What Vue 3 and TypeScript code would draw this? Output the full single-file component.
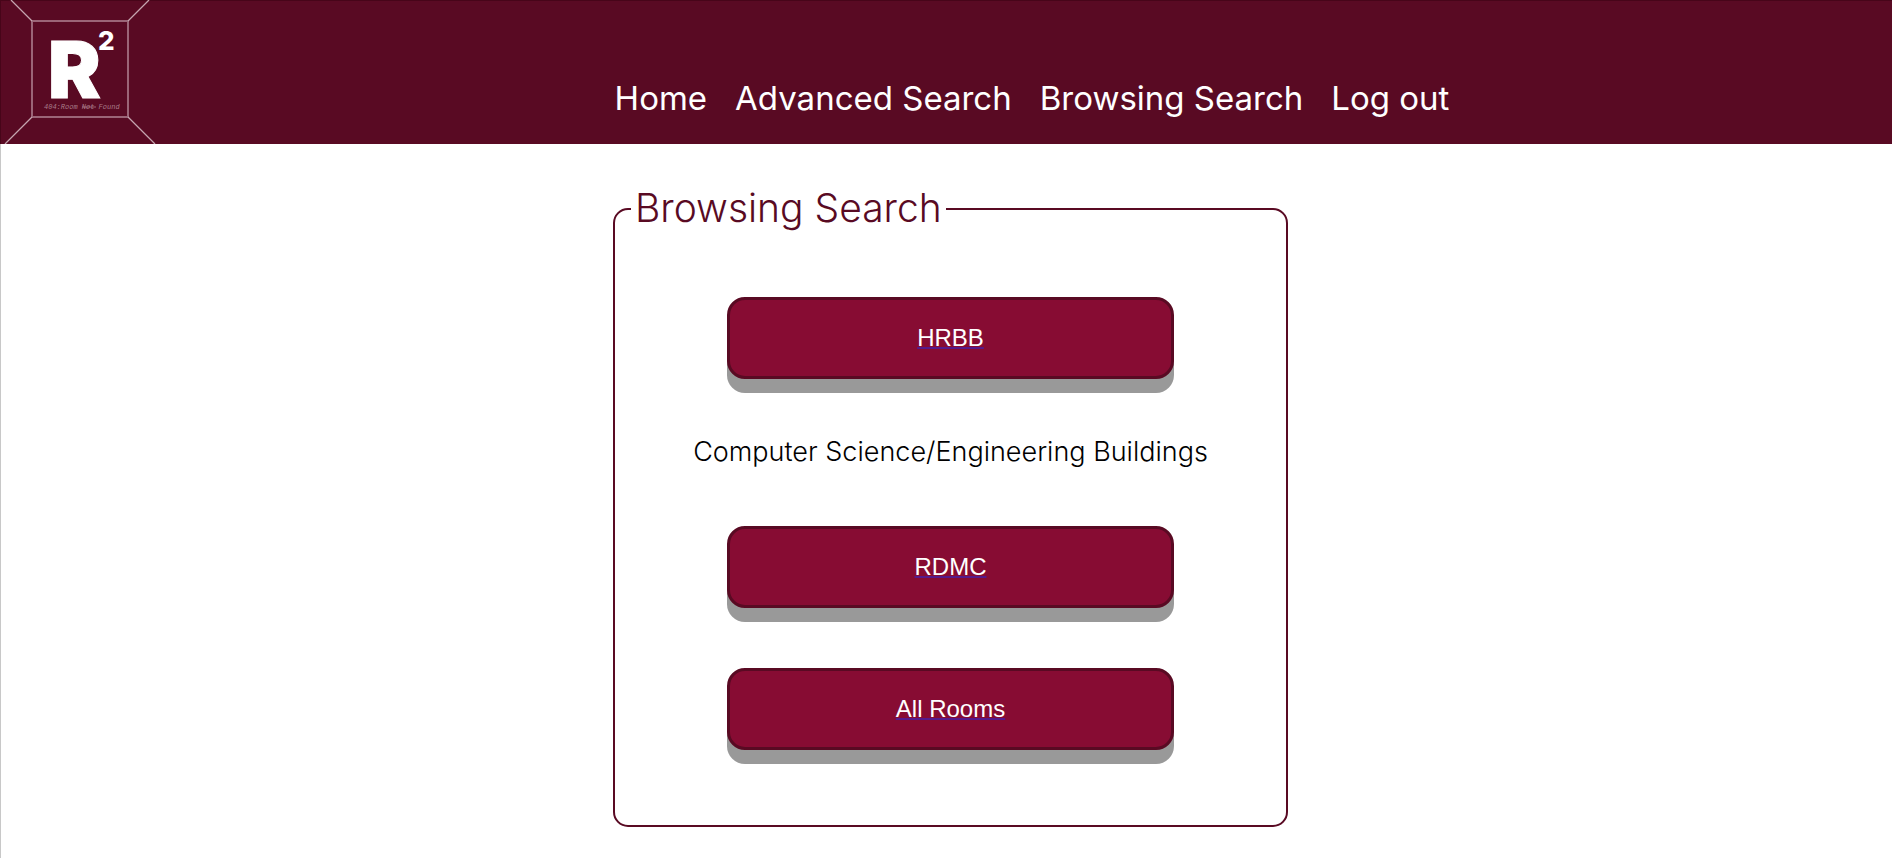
<script setup lang="ts">
interface NavLink {
  label: string
  href: string
}

const links: NavLink[] = [
  { label: 'Home', href: '#home' },
  { label: 'Advanced Search', href: '#advanced' },
  { label: 'Browsing Search', href: '#browsing' },
  { label: 'Log out', href: '#logout' },
]
</script>

<template>
  <div class="page">
    <header class="header">
      <a class="logo" href="#home" aria-label="Home page">
        <svg width="160" height="144" viewBox="0 0 160 144">
          <g fill="none" stroke="#9b6577">
            <rect x="32" y="21" width="96" height="96" stroke-width="2" />
            <path d="M11 0 32 21M149 0 128 21M5 144 32 117M155 144 128 117" stroke="#c5a5af" stroke-width="1.3" />
            <path d="M82 107H96" />
          </g>
          <text class="logo-r" x="48" y="98">R</text>
          <text class="logo-two" x="98" y="50">2</text>
          <text class="logo-tag" x="44" y="109">404:Room Not Found</text>
        </svg>
      </a>
      <nav class="nav">
        <a v-for="link in links" :key="link.label" :href="link.href">{{ link.label }}</a>
      </nav>
    </header>
    <main class="main">
      <fieldset class="panel">
        <legend>Browsing Search</legend>
        <div class="choices">
          <a class="choice" href="#hrbb">HRBB</a>
          <p class="note">Computer Science/Engineering Buildings</p>
          <a class="choice" href="#rdmc">RDMC</a>
          <a class="choice" href="#all">All Rooms</a>
        </div>
      </fieldset>
    </main>
  </div>
</template>

<style>
body {
  margin: 0;
  background: #fff;
}
</style>

<style scoped>
.page {
  box-sizing: border-box;
  min-height: 100vh;
  border-left: 1px solid #c8c8c8;
}
.header {
  display: flex;
  box-sizing: border-box;
  height: 144px;
  margin-left: -1px;
  background: #590a23;
  border-top: 1px solid #470519;
  border-left: 1px solid #470519;
}
.logo {
  flex: none;
  width: 172px;
  height: 144px;
  margin: -1px 0 0 -1px;
}
.logo svg {
  display: block;
}
.logo text {
  fill: #fff;
}
.logo .logo-r {
  font: 900 79px Inter, sans-serif;
  stroke: #fff;
  stroke-width: 1px;
}
.logo .logo-two {
  font: 800 26px Inter, sans-serif;
}
.logo .logo-tag {
  font: italic 7px "Liberation Mono", monospace;
  fill: #a87b89;
}
.nav {
  display: flex;
  flex: 1;
  justify-content: center;
  align-items: flex-end;
  gap: 28px;
  padding-bottom: 26px;
}
.nav a {
  color: #fff;
  font: 400 33px/40px Inter, sans-serif;
  text-decoration: none;
  white-space: nowrap;
}
.main {
  display: flex;
  justify-content: center;
  padding: 39px 4px 24px 12px;
}
.panel {
  box-sizing: border-box;
  width: 36%;
  min-width: max-content;
  margin: 0;
  padding: 0 16px 75px;
  border: 2px solid #590a23;
  border-radius: 15px;
}
.panel legend {
  padding: 0 4px 2px;
  color: #590a23;
  font: 300 39px/50px Inter, sans-serif;
}
.choices {
  display: flex;
  flex-direction: column;
  align-items: center;
  padding-top: 62px;
}
.choice {
  box-sizing: border-box;
  width: 70%;
  padding: 25px 12px;
  border: 3px solid #590a23;
  border-radius: 18px;
  background: #870c33;
  box-shadow: 0 14px #999;
  color: #fff;
  font: 24px/26px "Liberation Sans", Arial, sans-serif;
  text-align: center;
  text-decoration: underline #551a8b 2px;
}
.choice + .choice {
  margin-top: 60px;
}
.note {
  margin: 55px 0 57px;
  color: #000;
  font: 300 27px/35px Inter, sans-serif;
}
</style>
